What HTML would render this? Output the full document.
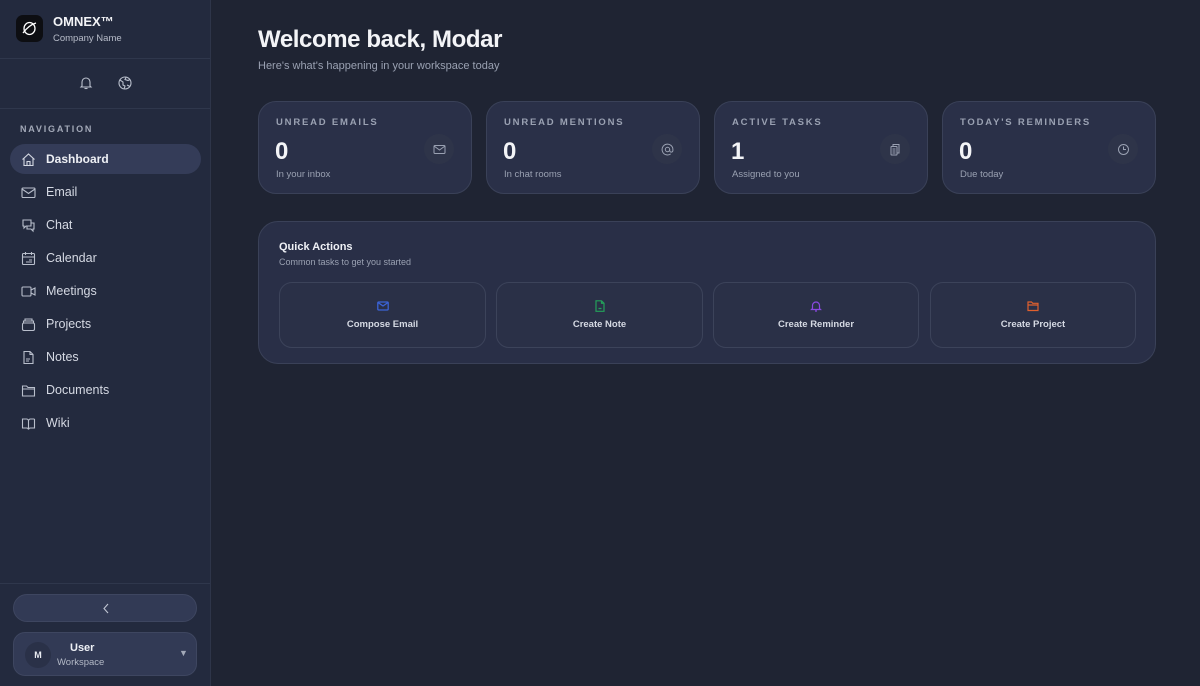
<!DOCTYPE html>
<html><head><meta charset="utf-8"><style>
*{box-sizing:border-box;margin:0;padding:0}
body{width:1200px;height:686px;overflow:hidden;background:#1f2433;font-family:"Liberation Sans",sans-serif;color:#e8eaf0;position:relative}
.sb{position:absolute;left:0;top:0;width:211px;height:686px;background:#232a3e;border-right:1px solid #2e3549}
.hr{position:absolute;left:0;width:210px;height:1px;background:#2f374c}
.logo{position:absolute;left:16px;top:15px;width:27px;height:27px;border-radius:7px;background:#0d0e12}
.nav{position:absolute;left:10px;width:191px;height:30px;border-radius:15px;display:flex;align-items:center;font-size:12.5px;color:#d5d9e3}
.nav svg{position:absolute;left:11px}
.nav span{position:absolute;left:36px}
.nav.a{background:#343c58;color:#eef0f5;font-weight:bold;font-size:12px}
.card{position:absolute;top:101px;width:214px;height:93px;border-radius:18px;background:#2a3048;border:1px solid #3a4158}
.card .t{position:absolute;left:17px;top:15px;font-size:9.5px;letter-spacing:1.8px;color:#9aa1b2;font-weight:bold}
.card .n{position:absolute;left:16px;top:36px;font-size:24px;font-weight:bold;color:#f3f4f7}
.card .s{position:absolute;left:17px;top:67px;font-size:9.5px;color:#9aa1b2}
.card .i{position:absolute;right:17px;top:32px;width:30px;height:30px;border-radius:50%;background:#2e3449;display:flex;align-items:center;justify-content:center}
.qa{position:absolute;left:258px;top:221px;width:898px;height:143px;border-radius:20px;background:#292f47;border:1px solid #3a4158}
.btn{position:absolute;top:60px;height:66px;border-radius:13px;border:1px solid #3c435a;background:#2a3047;font-size:9.5px;font-weight:bold;color:#d5d9e3;text-align:center}
.btn svg{position:absolute;left:50%;margin-left:-6px;top:17px}
.btn span{position:absolute;left:0;right:0;top:36px}
</style></head><body>
<div class="sb">
<div class="logo"><svg width="27" height="27" viewBox="0 0 27 27"><ellipse cx="13.5" cy="13.5" rx="5.5" ry="6" fill="none" stroke="#fff" stroke-width="1.3"/><path d="M7 18 Q13 10 20 8" fill="none" stroke="#fff" stroke-width="1.3"/></svg></div>
<div style="position:absolute;left:53px;top:14px;font-size:13px;font-weight:bold;color:#f3f4f7">OMNEX™</div>
<div style="position:absolute;left:53px;top:33px;font-size:9.5px;color:#b7bcc9">Company Name</div>
<div class="hr" style="top:58px"></div>
<svg style="position:absolute;left:79px;top:76px" width="14" height="14" viewBox="0 0 14 14" fill="none" stroke="#b9bfcc" stroke-width="1.1"><path d="M3 10V6a4 4 0 0 1 8 0v4l1 1H2z"/><path d="M5.5 12.5h3"/></svg>
<svg style="position:absolute;left:118px;top:76px" width="14" height="14" viewBox="0 0 14 14" fill="none" stroke="#b9bfcc" stroke-width="1.1"><circle cx="7" cy="7" r="6"/><path d="M2 4l3 2 0 3 2 1-1 3M8 1.5l-1 2 3 1 2-1M9 9l2 1 1 1"/></svg>
<div class="hr" style="top:108px"></div>
<div style="position:absolute;left:20px;top:124px;font-size:9px;letter-spacing:1.8px;font-weight:bold;color:#a3a9b8">NAVIGATION</div>
<div class="nav a" style="top:144px"><svg width="15" height="15" viewBox="0 0 15 15" fill="none" stroke="#d5d9e3" stroke-width="1.1"><path d="M1.5 7.5L7.5 2l6 5.5M3 6.5V13.5h9V6.5M6 13.5v-4h3v4"/></svg><span>Dashboard</span></div>
<div class="nav" style="top:177px"><svg width="15" height="15" viewBox="0 0 15 15" fill="none" stroke="#b9bfcc" stroke-width="1.1"><rect x="1" y="3" width="13" height="9.5" rx="1"/><path d="M1 4l6.5 4.5L14 4"/></svg><span>Email</span></div>
<div class="nav" style="top:210px"><svg width="15" height="15" viewBox="0 0 15 15" fill="none" stroke="#b9bfcc" stroke-width="1.1"><path d="M2 2h8v6H5l-2 2V8H2zM10 5h3v6h-1v2l-2-2H6V8"/></svg><span>Chat</span></div>
<div class="nav" style="top:243px"><svg width="15" height="15" viewBox="0 0 15 15" fill="none" stroke="#b9bfcc" stroke-width="1.1"><rect x="1.5" y="2.5" width="12" height="11" rx="1"/><path d="M1.5 6h12M4.5 1v3M10.5 1v3M8 9h3M5 11h6"/></svg><span>Calendar</span></div>
<div class="nav" style="top:276px"><svg width="15" height="15" viewBox="0 0 15 15" fill="none" stroke="#b9bfcc" stroke-width="1.1"><rect x="1" y="3" width="9" height="9" rx="1"/><path d="M10 6l4-2v7l-4-2"/></svg><span>Meetings</span></div>
<div class="nav" style="top:309px"><svg width="15" height="15" viewBox="0 0 15 15" fill="none" stroke="#b9bfcc" stroke-width="1.1"><rect x="1.5" y="6" width="12" height="7.5" rx="1.5"/><path d="M2.5 6V4h10v2M4 4V2h7v2"/></svg><span>Projects</span></div>
<div class="nav" style="top:342px"><svg width="15" height="15" viewBox="0 0 15 15" fill="none" stroke="#b9bfcc" stroke-width="1.1"><path d="M3 1.5h6l3 3v9H3zM9 1.5v3h3M5 9h4M5 11h3"/></svg><span>Notes</span></div>
<div class="nav" style="top:375px"><svg width="15" height="15" viewBox="0 0 15 15" fill="none" stroke="#b9bfcc" stroke-width="1.1"><path d="M1.5 3h4l1.5 1.5h6.5v8.5h-12zM1.5 6h12"/></svg><span>Documents</span></div>
<div class="nav" style="top:408px"><svg width="15" height="15" viewBox="0 0 15 15" fill="none" stroke="#b9bfcc" stroke-width="1.1"><path d="M1.5 3h4a2 2 0 0 1 2 2v8.5a2 2 0 0 0-2-1.5h-4zM13.5 3h-4a2 2 0 0 0-2 2M13.5 3v9h-4a2 2 0 0 0-2 1.5"/></svg><span>Wiki</span></div>
<div class="hr" style="top:583px"></div>
<div style="position:absolute;left:13px;top:594px;width:184px;height:28px;border-radius:14px;background:#323a55;border:1px solid #3e4660"><svg style="position:absolute;left:88px;top:8px" width="8" height="11" viewBox="0 0 8 11" fill="none" stroke="#c0c5d2" stroke-width="1.1"><path d="M6 1L2 5.5 6 10"/></svg></div>
<div style="position:absolute;left:13px;top:632px;width:184px;height:44px;border-radius:12px;background:#323a55;border:1px solid #3e4660">
<div style="position:absolute;left:11px;top:9px;width:26px;height:26px;border-radius:50%;background:#2a3148;font-size:9px;font-weight:bold;color:#e8eaf0;text-align:center;line-height:26px">M</div>
<div style="position:absolute;left:56px;top:9px;font-size:11px;font-weight:bold;color:#eef0f5">User</div>
<div style="position:absolute;left:43px;top:24px;font-size:9.5px;color:#b3b9c6">Workspace</div>
<div style="position:absolute;left:165px;top:15px;font-size:9px;color:#a3a9b8">▼</div>
</div>
</div>
<div style="position:absolute;left:258px;top:26px;font-size:24px;font-weight:bold;color:#f3f4f7;letter-spacing:-0.4px">Welcome back, Modar</div>
<div style="position:absolute;left:258px;top:60px;font-size:11px;color:#9aa1b2">Here's what's happening in your workspace today</div>
<div class="card" style="left:258px"><div class="t">UNREAD EMAILS</div><div class="n">0</div><div class="s">In your inbox</div><div class="i"><svg width="13" height="13" viewBox="0 0 13 13" fill="none" stroke="#9aa1b2" stroke-width="1"><rect x="1" y="2.5" width="11" height="8" rx="1"/><path d="M1 3l5.5 4L12 3"/></svg></div></div>
<div class="card" style="left:486px"><div class="t">UNREAD MENTIONS</div><div class="n">0</div><div class="s">In chat rooms</div><div class="i"><svg width="13" height="13" viewBox="0 0 13 13" fill="none" stroke="#9aa1b2" stroke-width="1"><circle cx="6.5" cy="6.5" r="2.2"/><path d="M8.7 6.5v1a1.6 1.6 0 0 0 3.2 0v-1a5.4 5.4 0 1 0-2.2 4.4"/></svg></div></div>
<div class="card" style="left:714px"><div class="t">ACTIVE TASKS</div><div class="n">1</div><div class="s">Assigned to you</div><div class="i"><svg width="13" height="13" viewBox="0 0 13 13" fill="none" stroke="#9aa1b2" stroke-width="1"><rect x="2" y="3.5" width="6" height="8.5" rx=".5"/><path d="M4 3.5V1.5h6v8.5H8M3.5 6h3M3.5 8h3M3.5 10h3"/></svg></div></div>
<div class="card" style="left:942px"><div class="t">TODAY'S REMINDERS</div><div class="n">0</div><div class="s">Due today</div><div class="i"><svg width="13" height="13" viewBox="0 0 13 13" fill="none" stroke="#9aa1b2" stroke-width="1"><circle cx="6.5" cy="6.5" r="5"/><path d="M6.5 3.5v3h2.5"/></svg></div></div>
<div class="qa">
<div style="position:absolute;left:20px;top:19px;font-size:11px;font-weight:bold;color:#eef0f5">Quick Actions</div>
<div style="position:absolute;left:20px;top:35px;font-size:9px;color:#9aa1b2">Common tasks to get you started</div>
<div class="btn" style="left:20px;width:207px"><svg width="12" height="12" viewBox="0 0 12 12" fill="none" stroke="#3b63d6" stroke-width="1.3"><rect x=".8" y="2" width="10.4" height="8" rx="1"/><path d="M1 2.5l5 3.5 5-3.5"/></svg><span>Compose Email</span></div>
<div class="btn" style="left:237px;width:207px"><svg width="12" height="12" viewBox="0 0 12 12" fill="none" stroke="#23a05a" stroke-width="1.2"><path d="M2 .8h5.5L10 3.3v8H2zM7.5 .8v2.5H10M4.5 8.5h3"/></svg><span>Create Note</span></div>
<div class="btn" style="left:454px;width:206px"><svg width="12" height="12" viewBox="0 0 12 12" fill="none" stroke="#8a48e0" stroke-width="1.2"><path d="M2.5 8.5V5.5a3.5 3.5 0 0 1 7 0v3l1 1h-9zM5 11h2"/></svg><span>Create Reminder</span></div>
<div class="btn" style="left:671px;width:206px"><svg width="12" height="12" viewBox="0 0 12 12" fill="none" stroke="#e0602e" stroke-width="1.2"><path d="M1 2h3.5l1.2 1.3H11v7.2H1zM1 5h10"/></svg><span>Create Project</span></div>
</div>
</body></html>
